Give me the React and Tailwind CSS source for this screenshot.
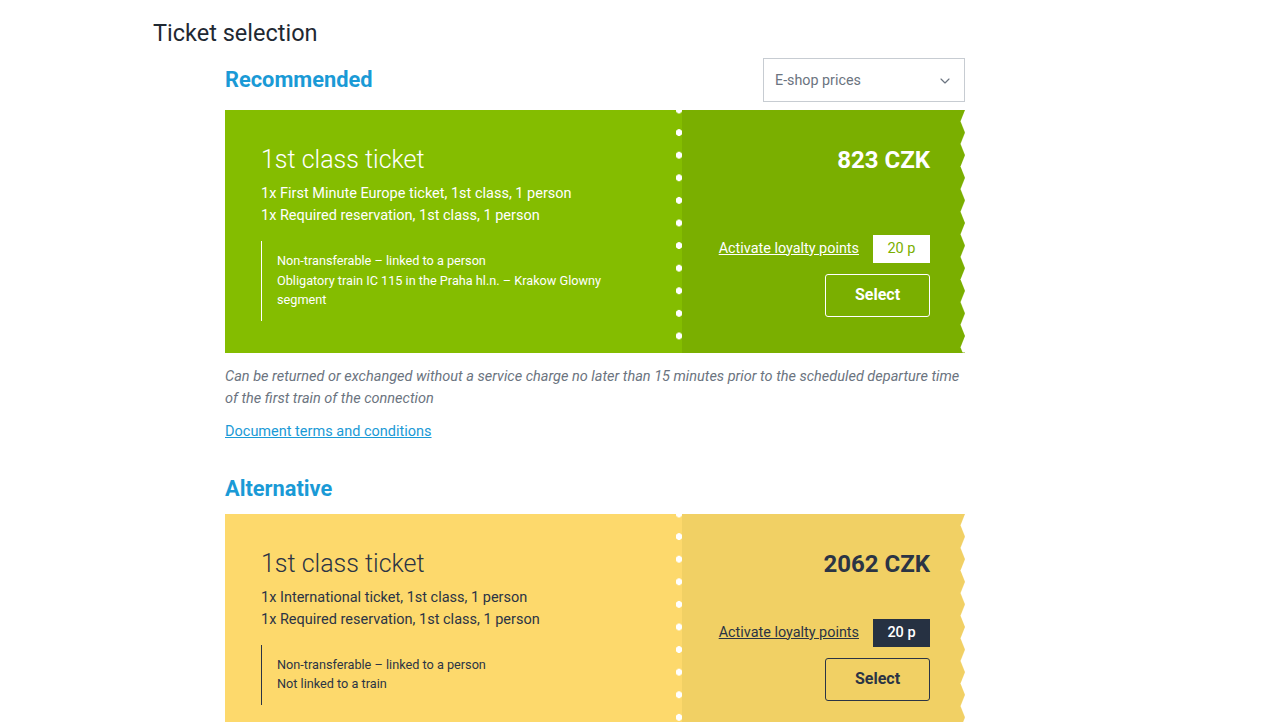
import { ChevronDown } from "lucide-react";

const tickets = {
  recommended: {
    title: "1st class ticket",
    items: [
      "1x First Minute Europe ticket, 1st class, 1 person",
      "1x Required reservation, 1st class, 1 person",
    ],
    notes: [
      "Non-transferable – linked to a person",
      "Obligatory train IC 115 in the Praha hl.n. – Krakow Glowny segment",
    ],
    price: "823 CZK",
  },
  alternative: {
    title: "1st class ticket",
    items: [
      "1x International ticket, 1st class, 1 person",
      "1x Required reservation, 1st class, 1 person",
    ],
    notes: ["Non-transferable – linked to a person", "Not linked to a train"],
    price: "2062 CZK",
  },
};

// Zubatý pravý okraj lístku
const Zigzag = ({ id }) => (
  <svg className="absolute top-0 right-0 h-full w-[5px]" aria-hidden="true">
    <defs>
      <pattern id={id} x="0" y="0" width="5" height="22.6" patternUnits="userSpaceOnUse">
        <polygon points="5,0 0.5,11.3 5,22.6" fill="#ffffff" />
      </pattern>
    </defs>
    <rect x="0" y="0" width="5" height="100%" fill={`url(#${id})`} />
  </svg>
);

const TicketCard = ({ ticket, variant }) => {
  const green = variant === "green";

  return (
    <div className="flex w-[740px]">
      {/* Levá část */}
      <div
        className={
          green
            ? "w-[451px] bg-[#84bd00] text-white pl-[36px] pt-[34px] pb-[32px]"
            : "w-[451px] bg-[#fdd96c] text-[#2b3445] pl-[36px] pt-[34px] pb-[32px]"
        }
      >
        <h3 className="text-[25px] leading-[32px] font-light">{ticket.title}</h3>
        <div className="mt-[7px] text-[14.5px] leading-[22px]">
          {ticket.items.map((item) => (
            <p key={item}>{item}</p>
          ))}
        </div>
        <div
          className={
            green
              ? "mt-[14px] border-l border-white pl-[15px] pt-[10px] pb-[11px] max-w-[345px] text-[12.7px] leading-[19.5px]"
              : "mt-[14px] border-l border-[#2b3445] pl-[15px] pt-[10px] pb-[11px] max-w-[345px] text-[12.7px] leading-[19.5px]"
          }
        >
          {ticket.notes.map((n) => (
            <p key={n}>{n}</p>
          ))}
        </div>
      </div>

      {/* Perforace */}
      <div
        className={
          green
            ? "w-[6px] bg-[#84bd00] [background-image:radial-gradient(circle,#ffffff_3px,transparent_3.6px)] [background-size:6px_22.6px] [background-position:0_-11.3px]"
            : "w-[6px] bg-[#fdd96c] [background-image:radial-gradient(circle,#ffffff_3px,transparent_3.6px)] [background-size:6px_22.6px] [background-position:0_-11.3px]"
        }
      />

      {/* Pravá část */}
      <div
        className={
          green
            ? "relative flex-1 bg-[#7aaf00] text-white flex flex-col justify-between items-end pt-[34px] pb-[36px] pr-[35px]"
            : "relative flex-1 bg-[#f1d064] text-[#2b3445] flex flex-col justify-between items-end pt-[34px] pb-[36px] pr-[35px]"
        }
      >
        <p className="text-[24px] leading-[32px] font-bold">{ticket.price}</p>
        <div className="flex flex-col items-end">
          <div className="flex items-center gap-[14px]">
            <a href="#" className="text-[14.4px] underline">
              Activate loyalty points
            </a>
            <span
              className={
                green
                  ? "w-[57px] h-[28px] flex items-center justify-center bg-white text-[#7aaf00] text-[14.5px]"
                  : "w-[57px] h-[28px] flex items-center justify-center bg-[#263142] text-white text-[14.5px] font-medium"
              }
            >
              20 p
            </span>
          </div>
          <button
            className={
              green
                ? "mt-[11px] w-[105px] h-[43px] rounded-[3px] border border-white text-[16px] font-bold"
                : "mt-[11px] w-[105px] h-[43px] rounded-[3px] border border-[#2b3445] text-[16px] font-bold"
            }
          >
            Select
          </button>
        </div>
        <Zigzag id={green ? "zz-green" : "zz-yellow"} />
      </div>
    </div>
  );
};

const App = () => {
  return (
    <div className="min-h-screen bg-white font-['Roboto',sans-serif] text-[#2b3445]">
      <div className="pl-[153px] pt-[17px]">
        <h1 className="text-[23.5px] leading-[32px] text-[#1f2933]">Ticket selection</h1>

        <div className="pl-[72px]">
          {/* Doporučeno */}
          <div className="mt-[9px] w-[740px] flex items-center justify-between">
            <h2 className="text-[21.8px] leading-[28px] font-bold text-[#1a9ad6]">
              Recommended
            </h2>
            <div className="w-[202px] h-[44px] border border-[#c7ccd2] flex items-center justify-between pl-[11px] pr-[11px] pt-[1px] text-[14.3px] text-[#6b7480]">
              <span>E-shop prices</span>
              <ChevronDown size={16} strokeWidth={1.75} />
            </div>
          </div>

          <div className="mt-[8px]">
            <TicketCard ticket={tickets.recommended} variant="green" />
          </div>

          <p className="mt-[13px] w-[740px] text-[14.5px] leading-[22px] italic text-[#6b7480]">
            Can be returned or exchanged without a service charge no later than 15 minutes prior to the scheduled departure time of the first train of the connection
          </p>
          <a
            href="#"
            className="block mt-[12px] text-[14.5px] leading-[20px] text-[#1a9ad6] underline"
          >
            Document terms and conditions
          </a>

          {/* Alternativa */}
          <h2 className="mt-[33px] text-[21.8px] leading-[28px] font-bold text-[#1a9ad6]">
            Alternative
          </h2>
          <div className="mt-[11px]">
            <TicketCard ticket={tickets.alternative} variant="yellow" />
          </div>
        </div>
      </div>
    </div>
  );
};

export default App;
